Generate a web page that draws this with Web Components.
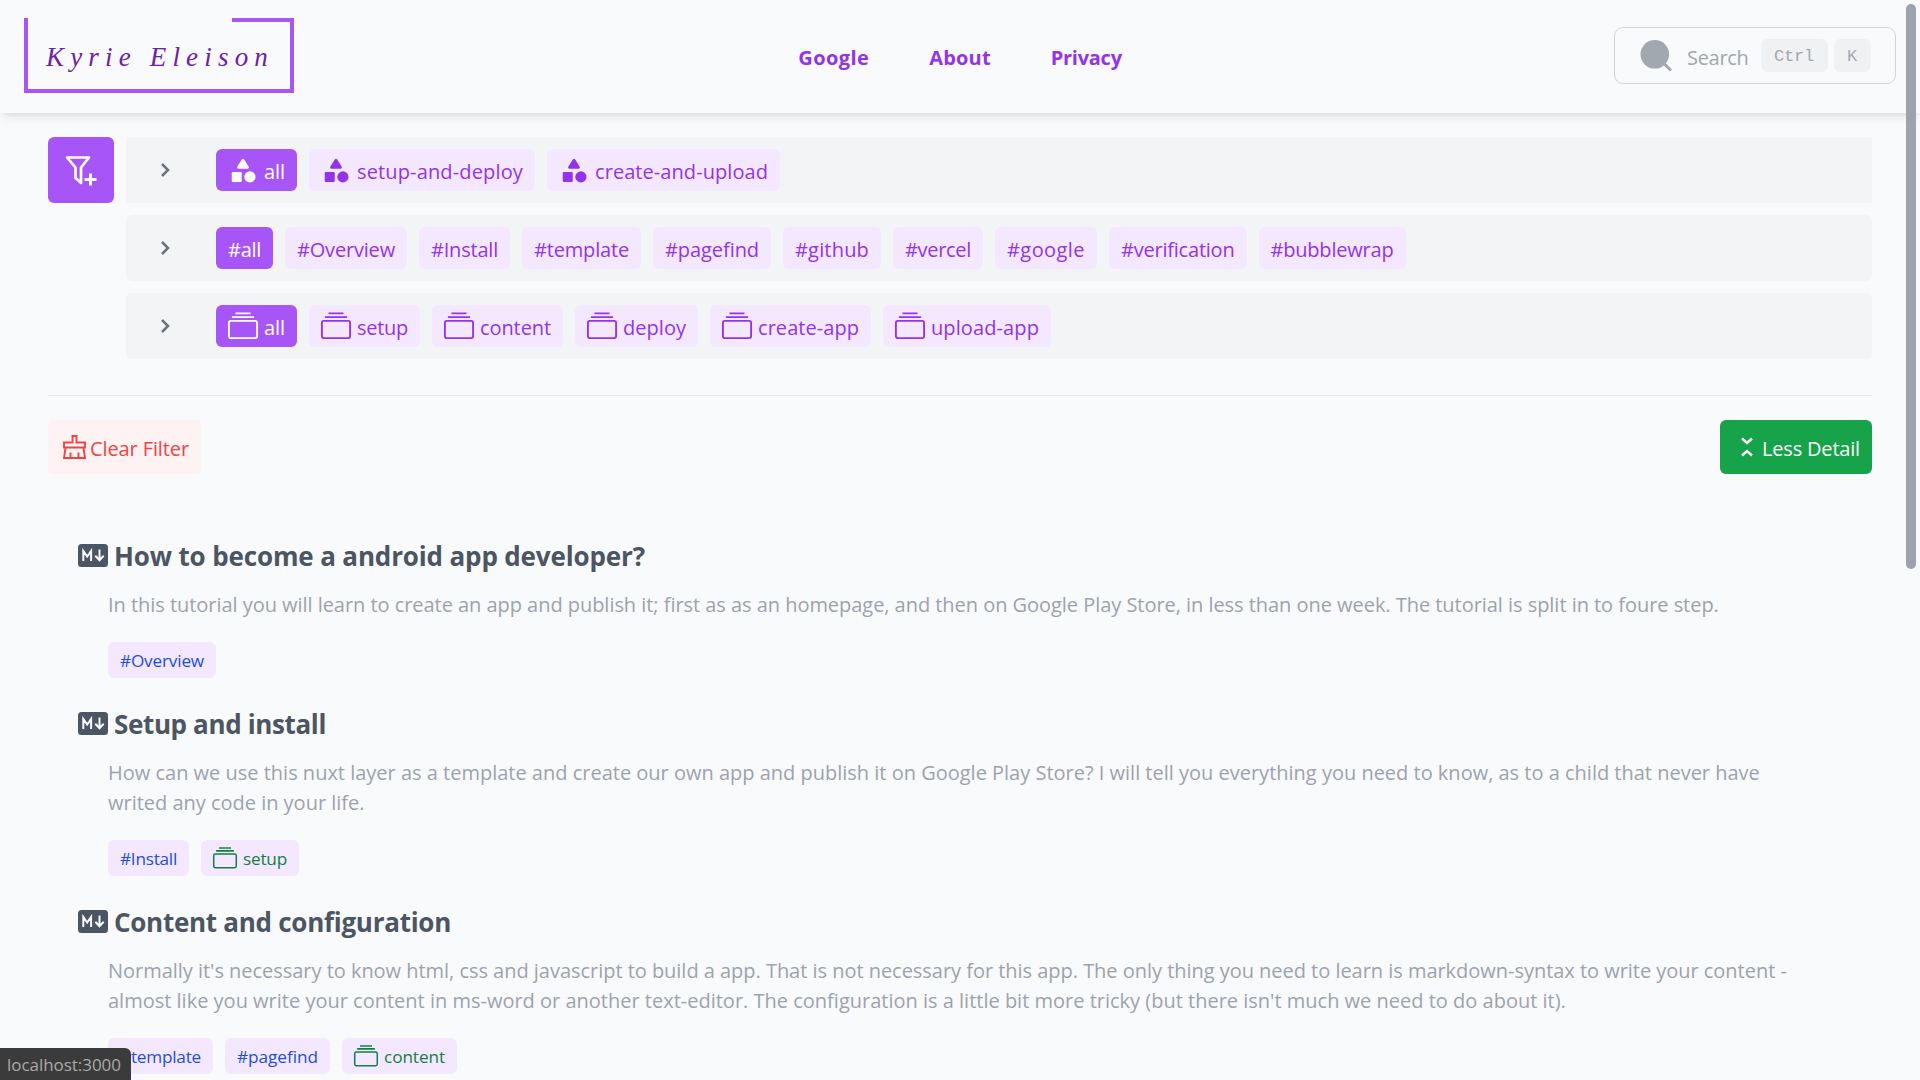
<!DOCTYPE html>
<html lang="en"><head><meta charset="utf-8"><title>Kyrie Eleison</title>
<style>
html,body{margin:0;height:100%;overflow:hidden}
body{background:#f9fafb;font-family:"Segoe UI","Open Sans","Noto Sans",sans-serif;font-size:20px;line-height:30px}
</style></head><body>
<app-page></app-page>
<script>
const ICONS={
funnel:['0 0 32 29','<path d="M2 1.500h22L16 11.500V27l-5.500-5V11.500z" fill="none" stroke="currentColor" stroke-width="2.700" stroke-linejoin="round"/><path d="M25.500 17.500v12M19.500 23.500h12" fill="none" stroke="currentColor" stroke-width="3"/>'],
chevron:['0 0 9 14','<path d="M1 1l6 6-6 6" fill="none" stroke="currentColor" stroke-width="2.500"/>'],
category:['0 0 24 24','<path d="M11.150 3.400 7.430 9.480c-.41.66.07 1.520.85 1.520h7.430c.78 0 1.260-.86.85-1.520L12.850 3.400c-.39-.64-1.310-.64-1.700 0z"/><circle cx="17.500" cy="17.500" r="4.500"/><path d="M4 21.500h6c.55 0 1-.45 1-1v-6c0-.55-.45-1-1-1H4c-.55 0-1 .45-1 1v6c0 .55.450 1 1 1z"/>'],
albums:['0 0 30 30','<rect x=".9" y="9.900" width="28.200" height="17.200" rx="2" fill="none" stroke="currentColor" stroke-width="1.900"/><path d="M7.500 2.400h15M3.900 6.100h22.200" fill="none" stroke="currentColor" stroke-width="1.900"/>'],
broom:['0 0 23 24','<path d="M9.500 7.500V1h4v6.500H22v5H1v-5zM2.500 13 1 23h21L20.500 13M7.500 17.500V23M15.500 17.500V23" fill="none" stroke="currentColor" stroke-width="1.900"/>'],
collapse:['0 0 12 20','<path d="M1 1.500l5 4.500 5-4.500M1 18.500l5-4.500 5 4.500" fill="none" stroke="currentColor" stroke-width="2.400"/>'],
md:['0 0 30 23','<rect width="30" height="23" rx="3.500"/><path d="M5.300 17V7l3.900 5.500L13.100 7v10M21.500 5.500v10.500M17.300 11.800l4.200 4.400 4.200-4.400" fill="none" stroke="#f9fafb" stroke-width="2"/>'],
search:['0 0 32 32','<circle cx="14.800" cy="14.300" r="14.300"/><path d="M24 23.500l7 7" stroke="currentColor" stroke-width="3"/>']};
class Base extends HTMLElement{
 constructor(){super();this.attachShadow({mode:'open'})}
 connectedCallback(){if(!this.shadowRoot.firstChild)this.shadowRoot.innerHTML=this.view()}
 a(n){return this.getAttribute(n)||''}
}
const def=(n,v)=>customElements.define(n,class extends Base{view(){return v(this)}});
def('ui-icon',e=>{const i=ICONS[e.a('name')];return `<style>:host{display:block;flex:none}svg{display:block;width:100%;height:100%;fill:currentColor;overflow:visible}</style><svg viewBox="${i[0]}">${i[1]}</svg>`});
/* Text that spreads its letters evenly over the width given in w. */
customElements.define('fit-text',class extends Base{
 view(){return `<style>:host{display:block;white-space:nowrap}span{display:inline-block;white-space:pre;font-kerning:normal}</style><span>${this.a('t')}</span>`}
 connectedCallback(){super.connectedCallback();const w=+this.a('w');if(!w)return;
  const s=this.shadowRoot.querySelector('span');this.style.width=w+'px';
  const n=this.a('t').length;s.style.letterSpacing='0.001px';
  s.style.letterSpacing=((w-s.getBoundingClientRect().width)/n)+'px'}
});
def('tag-chip',e=>`<style>:host{display:flex;box-sizing:border-box;align-items:center;height:42px;padding:0 12px;border-radius:6px;background:#f3e8ff;color:#9333ea;gap:6px}
:host([on]){background:#a855f7;color:#fff}
:host([small]){height:36px;font-size:17.200px;line-height:24px;color:#1d4ed8}
:host([small][icon]){color:#15803d}
ui-icon{width:30px;height:30px}:host([small]) ui-icon{width:24px;height:24px}
fit-text{padding-top:4px}:host([small]) fit-text{padding-top:1px}</style>
${e.a('icon')?`<ui-icon name="${e.a('icon')}"></ui-icon>`:''}<fit-text t="${e.a('t')}" w="${e.a('w')}"></fit-text>`);
def('filter-row',e=>`<style>:host{display:flex;align-items:center;box-sizing:border-box;height:66px;background:#f3f4f6;border-radius:6px;padding-left:35px;color:#6b7280}
:host([square]){border-radius:0}ui-icon{width:9px;height:14px;margin-right:46px}div{display:flex;gap:12px}</style><ui-icon name="chevron"></ui-icon><div><slot></slot></div>`);
def('site-logo',()=>`<style>:host{display:block;box-sizing:border-box;width:270px;height:75px;color:#6b21a8;font:italic 27px/32px "Liberation Serif",serif;border:4px solid #a855f7;border-top:0;
background:linear-gradient(#a855f7,#a855f7) right top/58px 4px no-repeat;padding:23px 0 0 18px}</style><fit-text t="Kyrie Eleison" w="228"></fit-text>`);
def('key-cap',e=>`<style>:host{display:flex;align-items:center;justify-content:center;width:${e.a('w')}px;height:33px;border-radius:6px;background:#f0f1f3;font:17px/24px "Liberation Mono",monospace}fit-text{padding-top:2px}</style><fit-text t="${e.a('t')}" w="${e.a('tw')}"></fit-text>`);
def('search-box',()=>`<style>:host{display:flex;box-sizing:border-box;align-items:center;width:282px;height:57px;border:1px solid #d1d5db;border-radius:9px;color:#a1a8b0;padding-left:25px}
ui-icon{width:32px;height:32px;margin-right:15px}.s{margin:4px 12px 0 0}key-cap{margin-right:6px}</style><ui-icon name="search"></ui-icon><fit-text class="s" t="Search" w="61.500"></fit-text><key-cap t="Ctrl" w="67" tw="40"></key-cap><key-cap t="K" w="37" tw="10"></key-cap>`);
def('site-header',()=>`<style>:host{display:grid;grid-template-columns:1fr auto 1fr;box-sizing:border-box;height:113px;padding:0 24px;background:#f9fafb;box-shadow:0 6px 9px -1.500px rgba(0,0,0,.08),0 3px 6px -3px rgba(0,0,0,.08)}
site-logo{margin-top:18px}nav{display:flex;gap:60px;padding-top:43px;font-weight:700;font-size:20px;color:#9333ea}search-box{justify-self:end;margin-top:27px}</style>
<site-logo></site-logo><nav><fit-text t="Google" w="71"></fit-text><fit-text t="About" w="61.500"></fit-text><fit-text t="Privacy" w="71"></fit-text></nav><search-box></search-box>`);
def('post-item',e=>`<style>:host{display:block}header{display:flex;align-items:center;gap:6px;height:42px;color:#4b5563;font-weight:700;font-size:26px;line-height:42px}
ui-icon{width:30px;height:23px;margin-top:-2px}section{margin:13px 0 0 30px;color:#9ca3af}footer{display:flex;gap:12px;margin:22px 0 0 30px}</style>
<header><ui-icon name="md"></ui-icon><fit-text t="${e.a('t')}" w="${e.a('w')}"></fit-text></header><section><slot name="d"></slot></section><footer><slot></slot></footer>`);
const chips=(l,ic,x='')=>l.map((c,i)=>`<tag-chip ${x} ${!x&&i==0?'on':''} t="${c[0]}" w="${c[1]}" ${ic?`icon="${ic}"`:''}></tag-chip>`).join('');
const post=(t,w,lines,c)=>`<post-item t="${t}" w="${w}">${lines.map(l=>`<fit-text slot="d" t="${l[0]}" w="${l[1]}"></fit-text>`).join('')}${c}</post-item>`;
def('app-page',()=>`<style>:host{display:block;position:relative;width:1920px;height:1080px;overflow:hidden}
main{padding:24px 48px 0}.f{display:flex;gap:12px;align-items:flex-start}.rows{flex:1;display:flex;flex-direction:column;gap:12px}
.fb{display:flex;align-items:center;justify-content:center;width:66px;height:66px;border-radius:6px;background:#a855f7;color:#fff}.fb ui-icon{width:32px;height:29px}
hr{border:0;height:1px;background:#e5e7eb;margin:36px 0 24px}.bar{display:flex;justify-content:space-between}
.c,.l{display:flex;align-items:center;box-sizing:border-box;height:54px;border-radius:6px}
.c{width:153px;background:#fef2f2;color:#ef4444;padding-left:15px;gap:4px}.c ui-icon{width:23px;height:24px}
.l{width:152px;background:#16a34a;color:#fff;padding-left:21px;gap:9px}.l ui-icon{width:12px;height:20px}.c fit-text,.l fit-text{padding-top:4px}
.posts{display:flex;flex-direction:column;gap:25px;padding:61px 0 0 30px}
.st{position:absolute;left:0;bottom:0;box-sizing:border-box;width:131px;height:32px;background:#3b3b3b;color:#a9a9a9;border-top-right-radius:6px;padding:3px 7px;font-size:17px;line-height:28px}
.sb{position:absolute;left:1906px;top:4px;width:10px;height:565px;border-radius:5px;background:#9ca3af}</style>
<site-header></site-header><main><div class="f"><div class="fb"><ui-icon name="funnel"></ui-icon></div><div class="rows">
<filter-row square>${chips([['all',21],['setup-and-deploy',166],['create-and-upload',173]],'category')}</filter-row>
<filter-row>${chips([['#all',33],['#Overview',98],['#Install',67],['#template',95],['#pagefind',94],['#github',74],['#vercel',66],['#google',78],['#verification',113.500],['#bubblewrap',123]])}</filter-row>
<filter-row>${chips([['all',21],['setup',51],['content',71],['deploy',63],['create-app',101],['upload-app',108]],'albums')}</filter-row></div></div>
<hr><div class="bar"><div class="c"><ui-icon name="broom"></ui-icon><fit-text t="Clear Filter" w="99"></fit-text></div><div class="l"><ui-icon name="collapse"></ui-icon><fit-text t="Less Detail" w="98"></fit-text></div></div>
<div class="posts">
${post('How to become a android app developer?',531,[['In this tutorial you will learn to create an app and publish it; first as as an homepage, and then on Google Play Store, in less than one week. The tutorial is split in to foure step.',1611]],chips([['#Overview',84]],'','small'))}
${post('Setup and install',212,[['How can we use this nuxt layer as a template and create our own app and publish it on Google Play Store? I will tell you everything you need to know, as to a child that never have',1652],['writed any code in your life.',256.500]],chips([['#Install',57]],'','small')+chips([['setup',44]],'albums','small'))}
${post('Content and configuration',337,[["Normally it's necessary to know html, css and javascript to build a app. That is not necessary for this app. The only thing you need to learn is markdown-syntax to write your content -",1679],["almost like you write your content in ms-word or another text-editor. The configuration is a little bit more tricky (but there isn't much we need to do about it).",1458]],chips([['#template',81],['#pagefind',81]],'','small')+chips([['content',61]],'albums','small'))}
</div></main><div class="st"><fit-text t="localhost:3000" w="114"></fit-text></div><div class="sb"></div>`);
</script></body></html>
